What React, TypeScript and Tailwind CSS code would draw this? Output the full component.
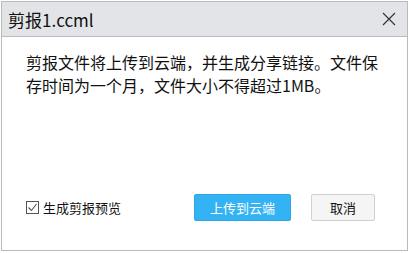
import React from "react";

export default function App() {
  const font = { fontFamily: '"Noto Sans CJK SC", "Noto Sans", sans-serif' };
  return (
    <div className="w-[409px] h-[253px] bg-white" style={font}>
      <div className="ml-[1px] mt-[1px] w-[407px] h-[250px] border border-[#b9babc] flex flex-col bg-white">
        <div className="h-[35px] bg-[#e2e4e7] border-b border-[#b9babc] flex items-center justify-between pl-[6px] pr-[11px]">
          <span className="text-[17px] text-[#111] leading-none">剪报1.ccml</span>
          <svg width="14" height="14" viewBox="0 0 14 14">
            <path d="M1 1 L13 13 M13 1 L1 13" stroke="#333" strokeWidth="1.2" />
          </svg>
        </div>
        <div className="flex-1 flex flex-col pl-[24px] pr-[32px]">
          <p className="mt-[14px] w-[360px] shrink-0 text-[16px] leading-[23px] text-[#111]">
            剪报文件将上传到云端，并生成分享链接。文件保存时间为一个月，文件大小不得超过1MB。
          </p>
          <div className="mt-auto mb-[29px] flex items-center">
            <label className="flex items-center gap-[4px]">
              <span className="w-[13px] h-[13px] border border-[#555] flex items-center justify-center bg-white">
                <svg width="11" height="11" viewBox="0 0 11 11">
                  <path d="M1.5 5.5 L4.5 8.5 L9.5 2" stroke="#555" strokeWidth="1.1" fill="none" />
                </svg>
              </span>
              <span className="text-[13px] text-[#111]">生成剪报预览</span>
            </label>
            <button className="ml-auto w-[97px] h-[27px] rounded-[2px] bg-[#33b3f4] border border-[#2ea6e6] text-white text-[13px] flex items-center justify-center">
              上传到云端
            </button>
            <button className="ml-[20px] w-[64px] h-[27px] rounded-[2px] bg-[#f5f5f5] border border-[#d0d0d0] text-[#111] text-[13px] flex items-center justify-center">
              取消
            </button>
          </div>
        </div>
      </div>
    </div>
  );
}
